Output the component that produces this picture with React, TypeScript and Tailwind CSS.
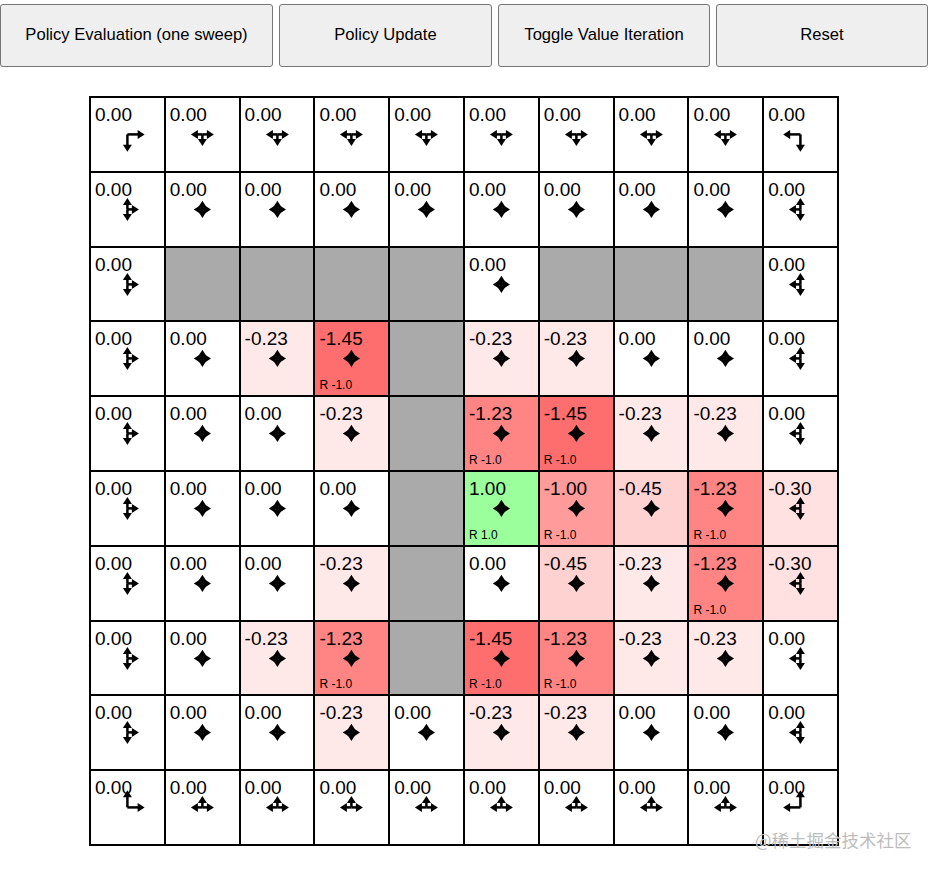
import React from "react";

const W = null;

// state values after one sweep, null = wall
const values: (number | null)[][] = [
  [0, 0, 0, 0, 0, 0, 0, 0, 0, 0],
  [0, 0, 0, 0, 0, 0, 0, 0, 0, 0],
  [0, W, W, W, W, 0, W, W, W, 0],
  [0, 0, -0.23, -1.45, W, -0.23, -0.23, 0, 0, 0],
  [0, 0, 0, -0.23, W, -1.23, -1.45, -0.23, -0.23, 0],
  [0, 0, 0, 0, W, 1.0, -1.0, -0.45, -1.23, -0.3],
  [0, 0, 0, -0.23, W, 0, -0.45, -0.23, -1.23, -0.3],
  [0, 0, -0.23, -1.23, W, -1.45, -1.23, -0.23, -0.23, 0],
  [0, 0, 0, -0.23, 0, -0.23, -0.23, 0, 0, 0],
  [0, 0, 0, 0, 0, 0, 0, 0, 0, 0],
];

const rewards: Record<string, string> = {
  "3,3": "R -1.0",
  "4,5": "R -1.0",
  "4,6": "R -1.0",
  "5,5": "R 1.0",
  "5,6": "R -1.0",
  "5,8": "R -1.0",
  "6,8": "R -1.0",
  "7,3": "R -1.0",
  "7,5": "R -1.0",
  "7,6": "R -1.0",
};

const buttons = [
  { label: "Policy Evaluation (one sweep)", w: "w-[273px]" },
  { label: "Policy Update", w: "w-[213px]" },
  { label: "Toggle Value Iteration", w: "w-[212px]" },
  { label: "Reset", w: "w-[212px]" },
];

function cellColor(v: number) {
  const ms = 100;
  let r = 255;
  let g = 255;
  let b = 255;
  if (v > 0) {
    r = 255 - v * ms;
    b = 255 - v * ms;
  }
  if (v < 0) {
    g = 255 + v * ms;
    b = 255 + v * ms;
  }
  return `rgb(${Math.floor(r)},${Math.floor(g)},${Math.floor(b)})`;
}

function Arrows({ r, c }: { r: number; c: number }) {
  const dirs: [number, number][] = [];
  if (c > 0) dirs.push([-1, 0]);
  if (r > 0) dirs.push([0, -1]);
  if (r < 9) dirs.push([0, 1]);
  if (c < 9) dirs.push([1, 0]);
  const ss = (37.5 * 0.92) / dirs.length;
  const cx = 36.4;
  const cy = 36.4;
  const hl = 7;
  const hw = 4.5;

  return (
    <svg className="absolute inset-0 h-full w-full" viewBox="0 0 72.8 72.8">
      {dirs.map(([dx, dy], i) => {
        const tx = cx + dx * ss;
        const ty = cy + dy * ss;
        const bx = cx + dx * (ss - hl);
        const by = cy + dy * (ss - hl);
        const px = -dy * hw;
        const py = dx * hw;
        return (
          <g key={i}>
            <line
              x1={cx}
              y1={cy}
              x2={cx + dx * (ss - 3)}
              y2={cy + dy * (ss - 3)}
              stroke="black"
              strokeWidth={2.5}
            />
            <polygon
              points={`${tx},${ty} ${bx + px},${by + py} ${bx - px},${by - py}`}
              fill="black"
            />
          </g>
        );
      })}
    </svg>
  );
}

const App = () => {
  return (
    <div className="relative min-h-screen bg-white font-['Liberation_Sans',Arial,sans-serif] text-black">
      <div className="flex gap-[6px] pt-[4px]">
        {buttons.map((b) => (
          <button
            key={b.label}
            className={`${b.w} h-[63px] rounded-[3px] border border-[#767676] bg-[#efefef] text-[16.6px] text-black`}
          >
            {b.label}
          </button>
        ))}
      </div>

      <div className="ml-[89px] mt-[29px] grid h-[750px] w-[750px] grid-cols-10 grid-rows-10 gap-[2px] bg-black p-[2px]">
        {values.map((row, r) =>
          row.map((v, c) => {
            if (v === null) {
              return <div key={`${r}-${c}`} className="bg-[#aaaaaa]" />;
            }
            const reward = rewards[`${r},${c}`];
            return (
              <div
                key={`${r}-${c}`}
                className="relative flex flex-col pl-[4px]"
                style={{ backgroundColor: cellColor(v) }}
              >
                <Arrows r={r} c={c} />
                <span className="relative pt-[7px] text-[19px] leading-none">
                  {v.toFixed(2)}
                </span>
                {reward && (
                  <span className="relative mt-auto pb-[4px] text-[12px] leading-none">
                    {reward}
                  </span>
                )}
              </div>
            );
          })
        )}
      </div>

      <div className="absolute left-[755px] top-[831px] font-['Noto_Sans_CJK_SC',sans-serif] text-[17.5px] leading-none text-[#bdbdbd]">
        @稀土掘金技术社区
      </div>
    </div>
  );
};

export default App;
